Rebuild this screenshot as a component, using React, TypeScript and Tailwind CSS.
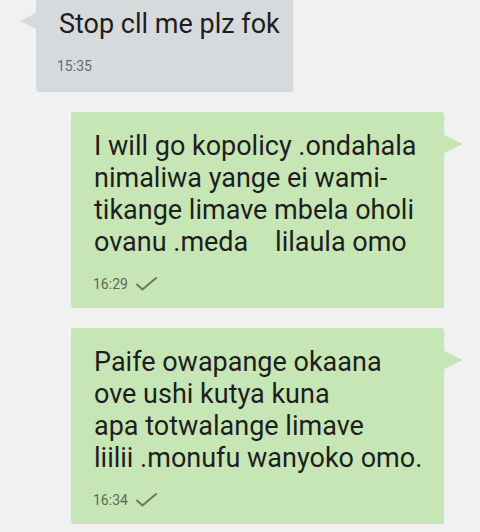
import React from "react"

const sent = [
  {
    lines: ["I will go kopolicy .ondahala", "nimaliwa yange ei wami-", "tikange limave mbela oholi", "ovanu .meda\u00a0\u00a0\u00a0\u00a0lilaula omo"],
    time: "16:29",
  },
  {
    lines: ["Paife owapange okaana", "ove ushi kutya kuna", "apa totwalange limave", "liilii .monufu wanyoko omo."],
    time: "16:34",
  },
]

function Check() {
  return (
    <svg width="21" height="14" viewBox="0 0 21 14" fill="none" className="ml-[8px]">
      <path d="M1 7.5 L6.5 12.5 L20 1" stroke="#6b7a67" strokeWidth="2" strokeLinecap="round" strokeLinejoin="round" />
    </svg>
  )
}

export default function App() {
  return (
    <div className="flex h-[532px] w-[480px] flex-col overflow-hidden bg-[#f1f1f1] font-['Roboto',sans-serif] text-[#1e1e1e]">
      <div className="relative -mt-[10px] ml-[36px] h-[101px] w-[256px] rounded-[2px] bg-[#d7dadc] pl-[23px] pt-[18px] shadow-[1px_1px_1px_rgba(0,0,0,0.12)]">
        <span className="absolute left-[-16px] top-[23px] h-0 w-0 border-y-[8px] border-r-[16px] border-y-transparent border-r-[#d7dadc]" />
        <p className="text-[27px] leading-[32px]">Stop cll me plz fok</p>
        <p className="mt-[16px] -ml-[2px] text-[14px] leading-[20px] text-[#666a6d]">15:35</p>
      </div>

      {sent.map(({ lines, time }) => (
        <div
          key={time}
          className="relative ml-[71px] mt-[21px] h-[195px] w-[372px] rounded-[2px] bg-[#c6e6b6] pl-[23px] pt-[18px] shadow-[1px_1px_1px_rgba(0,0,0,0.12)]"
        >
          <span className="absolute right-[-20px] top-[22px] h-0 w-0 border-y-[10px] border-l-[20px] border-y-transparent border-l-[#c6e6b6]" />
          <div className="text-[27px] leading-[32px]">
            {lines.map((line) => (
              <p key={line} className="whitespace-pre">{line}</p>
            ))}
          </div>
          <div className="mt-[16px] -ml-[1px] flex items-center">
            <span className="text-[14px] leading-[20px] text-[#5c6b58]">{time}</span>
            <Check />
          </div>
        </div>
      ))}
    </div>
  )
}
